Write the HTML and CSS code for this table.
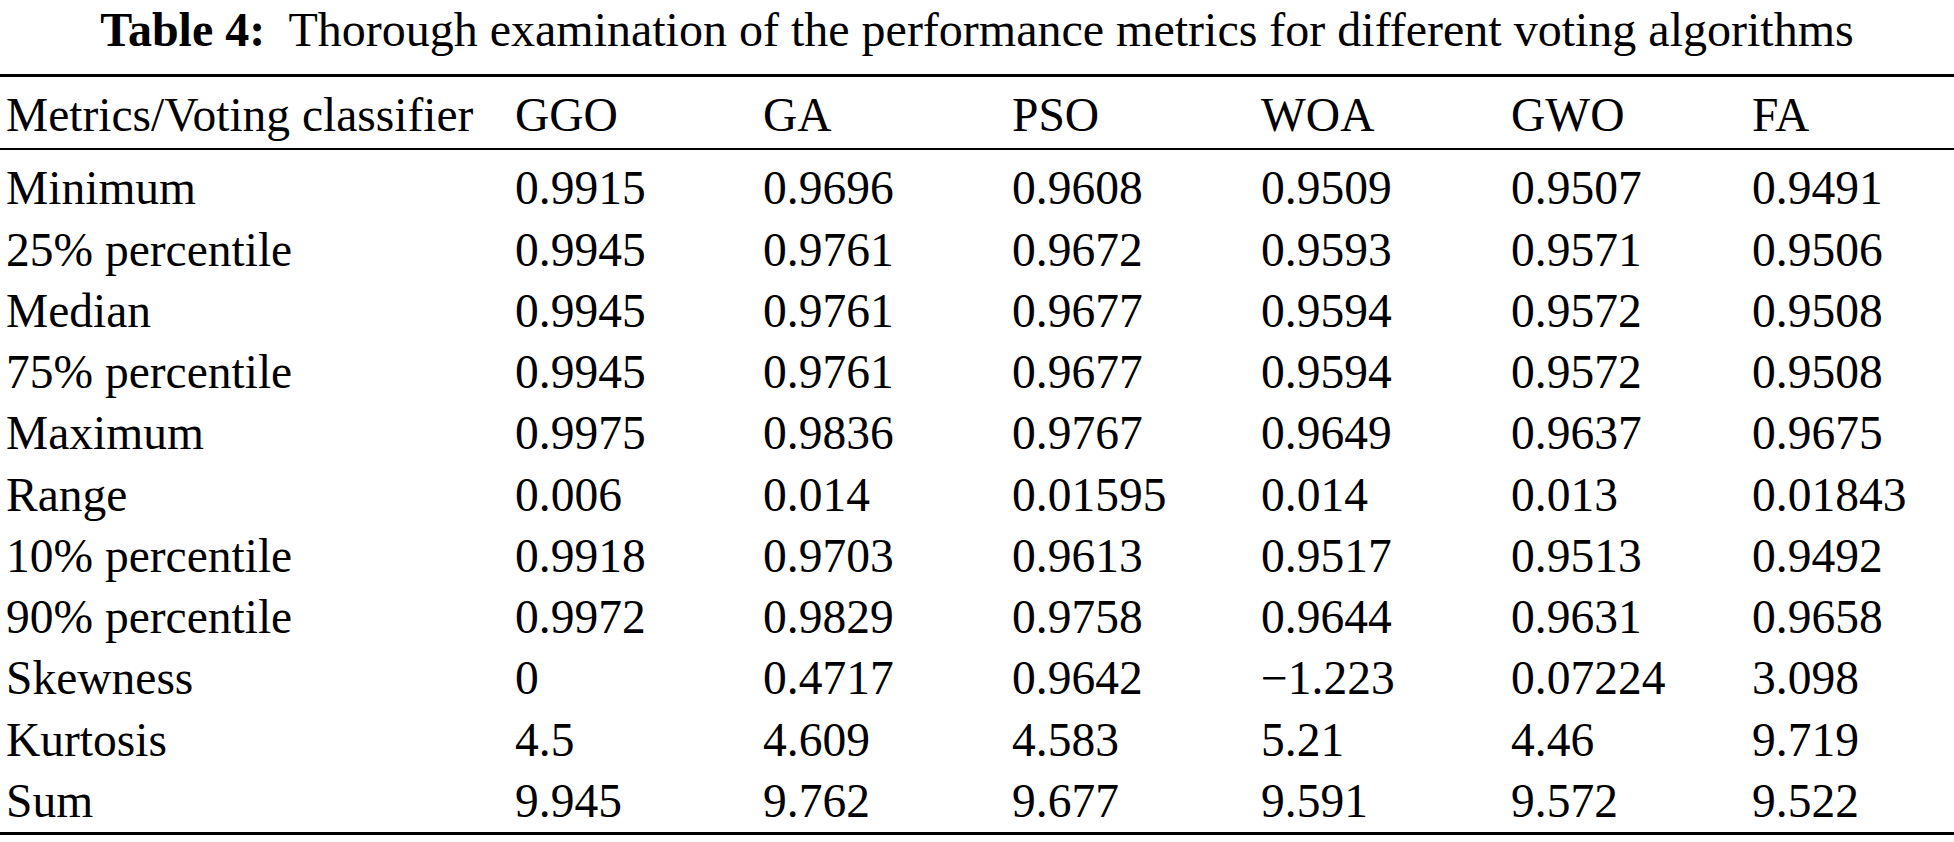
FILE: index.html
```html
<!DOCTYPE html>
<html lang="en">
<head>
<meta charset="utf-8">
<title>Table 4</title>
<link rel="stylesheet" href="styles.css">
</head>
<body>
<div class="page">
  <p class="caption"><b>Table 4:</b>&nbsp; Thorough examination of the performance metrics for different voting algorithms</p>
  <table class="metrics">
    <colgroup>
      <col class="c0"><col class="c1"><col class="c2"><col class="c3"><col class="c4"><col class="c5"><col class="c6">
    </colgroup>
    <thead>
      <tr><th>Metrics/Voting classifier</th><th>GGO</th><th>GA</th><th>PSO</th><th>WOA</th><th>GWO</th><th>FA</th></tr>
    </thead>
    <tbody>
      <tr><td>Minimum</td><td>0.9915</td><td>0.9696</td><td>0.9608</td><td>0.9509</td><td>0.9507</td><td>0.9491</td></tr>
      <tr><td>25% percentile</td><td>0.9945</td><td>0.9761</td><td>0.9672</td><td>0.9593</td><td>0.9571</td><td>0.9506</td></tr>
      <tr><td>Median</td><td>0.9945</td><td>0.9761</td><td>0.9677</td><td>0.9594</td><td>0.9572</td><td>0.9508</td></tr>
      <tr><td>75% percentile</td><td>0.9945</td><td>0.9761</td><td>0.9677</td><td>0.9594</td><td>0.9572</td><td>0.9508</td></tr>
      <tr><td>Maximum</td><td>0.9975</td><td>0.9836</td><td>0.9767</td><td>0.9649</td><td>0.9637</td><td>0.9675</td></tr>
      <tr><td>Range</td><td>0.006</td><td>0.014</td><td>0.01595</td><td>0.014</td><td>0.013</td><td>0.01843</td></tr>
      <tr><td>10% percentile</td><td>0.9918</td><td>0.9703</td><td>0.9613</td><td>0.9517</td><td>0.9513</td><td>0.9492</td></tr>
      <tr><td>90% percentile</td><td>0.9972</td><td>0.9829</td><td>0.9758</td><td>0.9644</td><td>0.9631</td><td>0.9658</td></tr>
      <tr><td>Skewness</td><td>0</td><td>0.4717</td><td>0.9642</td><td>&minus;1.223</td><td>0.07224</td><td>3.098</td></tr>
      <tr><td>Kurtosis</td><td>4.5</td><td>4.609</td><td>4.583</td><td>5.21</td><td>4.46</td><td>9.719</td></tr>
      <tr><td>Sum</td><td>9.945</td><td>9.762</td><td>9.677</td><td>9.591</td><td>9.572</td><td>9.522</td></tr>
    </tbody>
  </table>
</div>
</body>
</html>
```

FILE: styles.css
```css
html, body {
  margin: 0;
  padding: 0;
  background: #ffffff;
}

.page {
  font-family: "Liberation Serif", "Times New Roman", serif;
  color: #000000;
  font-size: 47.5px;
}

.caption {
  margin: 0 0 14px 0;
  height: 60px;
  line-height: 60px;
  font-size: 48px;
  text-align: center;
  white-space: nowrap;
}

.caption b {
  font-weight: bold;
}

.metrics {
  width: 100%;
  border-collapse: collapse;
  table-layout: fixed;
  border-top: 3px solid #000;
  border-bottom: 3px solid #000;
}

.c0 { width: 509px; }
.c1 { width: 248px; }
.c2 { width: 249px; }
.c3 { width: 249px; }
.c4 { width: 250px; }
.c5 { width: 241px; }

.metrics th,
.metrics td {
  padding: 0 0 0 6px;
  text-align: left;
  font-weight: normal;
  line-height: 61.25px;
  white-space: nowrap;
  vertical-align: middle;
}

.metrics thead th {
  padding-top: 8px;
  padding-bottom: 2px;
  border-bottom: 2px solid #000;
}

.metrics tbody tr:first-child td {
  padding-top: 8px;
}
```
